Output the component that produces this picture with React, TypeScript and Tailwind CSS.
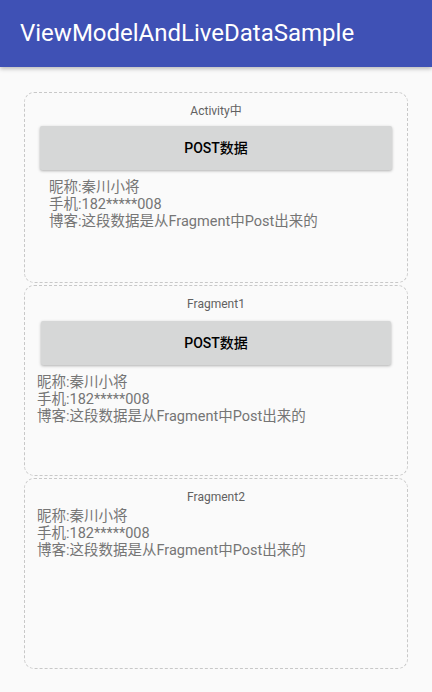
import React from "react";

const font = { fontFamily: "Roboto, 'Noto Sans CJK SC', sans-serif" };

function Info({ className }: { className: string }) {
  return (
    <div className={`text-[14.5px] leading-[17px] text-[#757575] ${className}`}>
      <div>昵称:秦川小将</div>
      <div>手机:182*****008</div>
      <div>博客:这段数据是从Fragment中Post出来的</div>
    </div>
  );
}

function PostButton({ className }: { className: string }) {
  return (
    <div
      className={`h-[44px] bg-[#d6d7d7] rounded-[2px] shadow-[0_1px_3px_rgba(0,0,0,0.3)] flex items-center justify-center text-[14px] font-medium text-black ${className}`}
    >
      POST数据
    </div>
  );
}

function Card({ title, children }: { title: string; children?: React.ReactNode }) {
  return (
    <div className="h-[191px] border border-dashed border-[#c8c8c8] rounded-[10px] pt-[11px]">
      <div className="text-[12px] leading-[14px] text-[#616161] text-center">{title}</div>
      {children}
    </div>
  );
}

export default function App() {
  return (
    <div className="w-[432px] h-[692px] bg-[#fafafa] overflow-hidden" style={font}>
      <div className="h-[67px] bg-[#3f51b5] flex items-center pl-[20px] shadow-[0_2px_4px_rgba(0,0,0,0.25)] relative">
        <span className="text-white text-[24px] leading-none mt-[-2px]">ViewModelAndLiveDataSample</span>
      </div>
      <div className="px-[24px] pt-[25px] flex flex-col gap-[2px]">
        <Card title="Activity中">
          <PostButton className="mx-[15px] mt-[8px]" />
          <Info className="mt-[9px] ml-[24px]" />
        </Card>
        <Card title="Fragment1">
          <PostButton className="ml-[16px] mr-[16px] mt-[10px]" />
          <Info className="mt-[9px] ml-[12px]" />
        </Card>
        <Card title="Fragment2">
          <Info className="mt-[4px] ml-[12px]" />
        </Card>
      </div>
    </div>
  );
}
